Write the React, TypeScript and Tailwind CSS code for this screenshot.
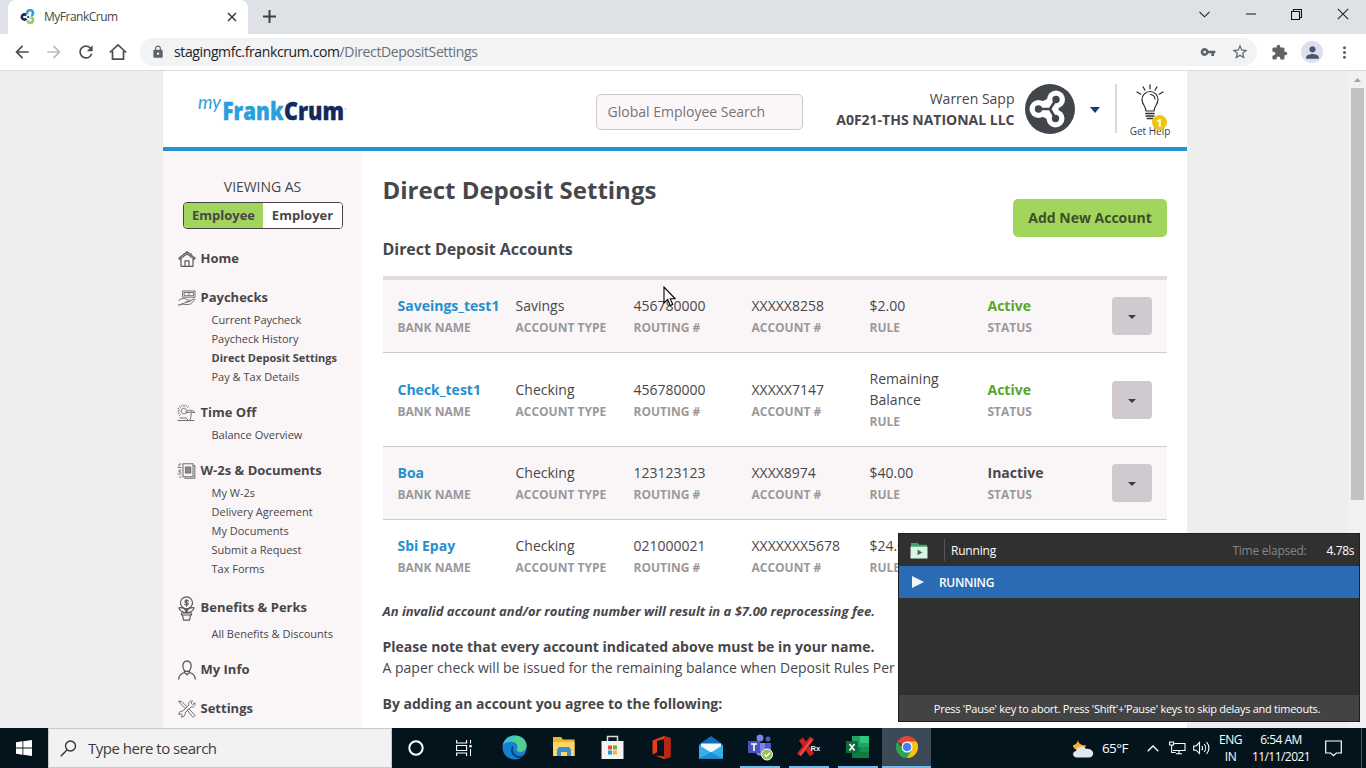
import type { ReactNode } from "react";
import {
  MdArrowBack,
  MdArrowForward,
  MdRefresh,
  MdLock,
  MdVpnKey,
  MdStarBorder,
  MdExtension,
  MdPerson,
  MdMoreVert,
} from "react-icons/md";

const line = {
  fill: "none",
  stroke: "#5b595d",
  strokeWidth: 1.2,
  strokeLinecap: "round" as const,
  strokeLinejoin: "round" as const,
};

function Favicon() {
  return (
    <svg width="16" height="16" viewBox="0 0 16 16" fill="none" strokeWidth="2.6">
      <path d="M6.4 6.3A2.6 2.6 0 1 0 6.400 9.700" stroke="#14285a" />
      <path d="M7.300 5.400A3 3 0 1 1 11.200 6.800" stroke="#2b9fdb" />
      <path d="M10.600 8.400A2.700 2.700 0 1 1 7.600 11.600" stroke="#8dcf5a" />
      <circle cx="8.200" cy="8" r="1.300" fill="#2f6f9f" />
    </svg>
  );
}

function TabStrip() {
  return (
    <div className="flex h-[34px] shrink-0 bg-[#dee1e6] pl-2">
      <div className="flex h-[34px] w-60 items-center rounded-t-lg bg-white pl-3">
        <Favicon />
        <span className="ml-2 w-[183px] text-[12px] tracking-[-0.5px] text-[#45474a]">MyFrankCrum</span>
        <svg width="10" height="10" viewBox="0 0 10 10" stroke="#3c4043" strokeWidth="1.6">
          <path d="M1 1l8 8M9 1l-8 8" />
        </svg>
      </div>
      <svg className="mt-[10px] ml-[15px]" width="13" height="13" viewBox="0 0 13 13" stroke="#3c4043" strokeWidth="2">
        <path d="M6.500 0v13M0 6.500h13" />
      </svg>
      <div className="mt-2 ml-auto flex h-3 items-center pr-[17px]">
        <svg className="mr-[36px]" width="11" height="7" viewBox="0 0 11 7" fill="none" stroke="#222" strokeWidth="1.1">
          <path d="M.5.8l5 5 5-5" />
        </svg>
        <svg className="mr-[35px]" width="10" height="2" viewBox="0 0 10 2">
          <path d="M0 .5h10v1H0z" fill="#111" />
        </svg>
        <svg className="mr-[35px]" width="11" height="11" viewBox="0 0 11 11" fill="none" stroke="#111" strokeWidth="1.1">
          <path d="M.5 2.500h8v8h-8zM2.500 2.500v-2h8v8h-2" />
        </svg>
        <svg width="12" height="12" viewBox="0 0 12 12" stroke="#222" strokeWidth="1.1">
          <path d="M.8.8l10.400 10.400M11.200.8L.8 11.200" />
        </svg>
      </div>
    </div>
  );
}

function Toolbar() {
  return (
    <div className="flex h-[37px] shrink-0 items-center border-b border-[#dadce0] bg-white pl-3 text-[#5f6368]">
      <MdArrowBack size={20} className="text-[#4a4d51]" />
      <MdArrowForward size={20} className="ml-3 text-[#babcbe]" />
      <MdRefresh size={20} className="ml-3 text-[#4a4d51]" />
      <svg className="ml-3" width="20" height="20" viewBox="0 0 20 20" fill="none" stroke="#4a4d51" strokeWidth="1.700">
        <path d="M1.800 10.500L10 2.800l8.200 7.700M4.500 9v8.200h11V9" />
      </svg>
      <div className="ml-3 flex h-7 w-[1117px] items-center rounded-full bg-[#f1f3f4] pr-[8px] pl-[11px]">
        <MdLock size={14} />
        <span className="ml-[9px] text-[14px] leading-5 tracking-[-0.38px] whitespace-nowrap text-[#202124]">
          stagingmfc.frankcrum.com<span className="text-[#6b6f74]">/DirectDepositSettings</span>
        </span>
        <MdVpnKey size={16} className="ml-auto" />
        <MdStarBorder size={18} className="ml-[15px]" />
      </div>
      <MdExtension size={17} className="ml-[14px]" />
      <div className="ml-[13px] flex size-[22px] items-center justify-center rounded-full bg-[#dbe0ec]">
        <MdPerson size={19} className="text-[#4a5470]" />
      </div>
      <MdMoreVert size={19} className="ml-[12px]" />
    </div>
  );
}

function Logo() {
  return (
    <svg width="152" height="32" viewBox="0 -2 152 32" className="overflow-visible font-['Open_Sans',sans-serif]">
      <text
        x="1"
        y="13"
        fontSize="20"
        fontStyle="italic"
        textLength="23"
        lengthAdjust="spacingAndGlyphs"
        fill="#2b9fdb"
        className="font-['Lato',sans-serif]"
      >
        my
      </text>
      <text
        x="25.500"
        y="24"
        fontSize="25.500"
        fontWeight="800"
        textLength="61"
        lengthAdjust="spacingAndGlyphs"
        fill="#2b9fdb"
        stroke="#2b9fdb"
        strokeWidth="0.400"
      >
        Frank
      </text>
      <text
        x="87"
        y="24"
        fontSize="25.500"
        fontWeight="800"
        textLength="60"
        lengthAdjust="spacingAndGlyphs"
        fill="#16295c"
        stroke="#16295c"
        strokeWidth="0.400"
      >
        Crum
      </text>
      <circle cx="148.500" cy="13" r=".8" fill="#9aa5bd" />
    </svg>
  );
}

function Avatar() {
  return (
    <svg width="50" height="50" viewBox="0 0 50 50">
      <circle cx="25" cy="25" r="25" fill="#42454c" />
      <g fill="#fff">
        <circle cx="13.500" cy="25" r="9" />
        <circle cx="31" cy="15.500" r="9" />
        <circle cx="30.500" cy="34.500" r="9" />
        <path d="M14 19l12-6 8 12-8 12-12-6z" />
      </g>
      <path d="M13.500 25H25l6-9.500M25 25l5.500 9.500" fill="none" stroke="#42454c" strokeWidth="2.600" />
      <g fill="#42454c">
        <circle cx="13.500" cy="25" r="3.700" />
        <circle cx="31" cy="15.500" r="3.700" />
        <circle cx="30.500" cy="34.500" r="3.700" />
      </g>
    </svg>
  );
}

function Bulb() {
  return (
    <svg width="30" height="36" viewBox="0 0 30 36" fill="none" stroke="#2c2c2e" strokeWidth="1.200" strokeLinecap="round">
      <path d="M15 .8v4M8 2.800l2 3.400M2 8l3.800 2.200M22 2.800l-2 3.400M28 8l-3.800 2.200" />
      <path d="M11 27c0-5-4-6-4-11.500a8 8 0 0 1 16 0c0 5.500-4 6.500-4 11.500z" />
      <path d="M15.500 10.500a5 5 0 0 1 4.500 4.500" />
      <path d="M11 29.500h8M11.300 32h7.400M12.500 34.500h5" strokeWidth="1.700" />
    </svg>
  );
}

function Header() {
  return (
    <header className="flex h-20 shrink-0 items-start border-b-4 border-[#2694cc] bg-white">
      <div className="mt-[23px] ml-[34px]">
        <Logo />
      </div>
      <div className="mt-[23px] ml-[247px] flex h-9 w-[207px] items-center rounded-[5px] border border-[#cfc8cc] bg-[#fbf7f8] pb-0.5 pl-[10.500px] text-[14px] text-[#757376]">
        Global Employee Search
      </div>
      <div className="mt-[17px] w-[212px] text-right text-[14px] leading-[21px] whitespace-nowrap text-[#48464a]">
        <div className="pr-[.5px]">Warren Sapp</div>
        <div className="pr-[.5px] font-bold">A0F21-THS NATIONAL LLC</div>
      </div>
      <div className="mt-[13px] ml-[10px]">
        <Avatar />
      </div>
      <svg className="mt-9 ml-[15px]" width="10" height="6" viewBox="0 0 10 6">
        <path d="M0 0h10L5 6z" fill="#123f7a" />
      </svg>
      <div className="mt-[13px] ml-[15px] h-[49px] w-0.5 bg-[#dcd8da]" />
      <div className="relative mt-[13px] ml-[11px] flex w-11 flex-col items-center">
        <Bulb />
        <span className="mt-1 text-[10px] leading-[14px] whitespace-nowrap text-[#3f3d40]">Get Help</span>
        <span className="absolute top-[31px] left-[24px] flex size-[15px] items-center justify-center rounded-full bg-[#edc50f] text-[11px] leading-none font-bold text-white">
          1
        </span>
      </div>
    </header>
  );
}

const icons: Record<string, ReactNode> = {
  home: (
    <svg width="18" height="16" viewBox="0 0 18 16" {...line}>
      <path d="M.8 7.200L9 .8l8.200 6.400-1 1.200L9 2.800 1.800 8.400zM3 8v7.300h12V8M7 15V9.800h4V15M13 2.500v1.800" />
    </svg>
  ),
  pay: (
    <svg width="18" height="16" viewBox="0 0 18 16" {...line} stroke="#747277" strokeWidth={1}>
      <path d="M5 1h12v6.200H5zM6.500 2.500h9v3.200h-9zM11 3v2.300" />
      <path d="M.8 10.200L4 8.600h3.500l2 1.400h2.300c1 0 .8 1.600-.2 1.600H8M12 11l3.800-2.200c1-.4 1.500.6.8 1.300L12.500 14c-3.500 1-6 .2-8.500.2L.8 15z" />
    </svg>
  ),
  time: (
    <svg width="19" height="18" viewBox="0 0 19 18" {...line} stroke="#747277" strokeWidth={1}>
      <circle cx="7" cy="7" r="2.800" strokeDasharray="2 .8" />
      <path d="M7 .8v1.500M2.500 2.500l1 1M11.500 2.500l-1 1M.8 7h1.400M2.500 11.500l1-1M4.500 1.200l.5 1M9.500 1.200l-.5 1M1 4.500l1.200.5M1 9.500L2.200 9" />
      <path d="M9 8.500c1-3 6-3.500 9 .2L13.500 8zM14 8c.4 3 0 6-1 8M1 16.500h16M3 14h6l2 2" />
    </svg>
  ),
  docs: (
    <svg width="19" height="16" viewBox="0 0 19 16" {...line} stroke="#747277" strokeWidth={1.100}>
      <path d="M6 .8h10v13H6zM16 2.500h1.800v12.700H8V14" />
      <path d="M8.500 4h5.200v6H8.500z" fill="#8b898c" />
      <path d="M4 1H2v2M4 4.500H1M4 7H2v2h2M4 11H1M4 14H1.500" strokeDasharray="1.500 1" />
    </svg>
  ),
  perks: (
    <svg width="17" height="25" viewBox="0 0 17 25" {...line}>
      <circle cx="8.500" cy="6.800" r="6" />
      <path d="M10.300 5c-1-1.200-3.500-.8-3.300.6.200 1.300 3 .8 3.200 2.200 0 1.400-2.500 1.600-3.400.4M8.500 3.500v6.600M8.500 13v4" />
      <path d="M8.500 16.500C5.500 16.500 2 15.500.9 11.800 4 11 7.600 12.500 8.500 16.500C9.500 12.500 13 11 16.100 11.800 15 15.500 11.500 16.500 8.500 16.500M3.500 17h10v2h-10zM4.500 19l1 5.200h6l1-5.200" />
    </svg>
  ),
  info: (
    <svg width="18" height="20" viewBox="0 0 18 20" {...line} strokeWidth={1.3}>
      <path d="M9 1c6 0 5 10.500 0 10.500S3 1 9 1zM6.500 10.500v2L9 14.700l2.500-2.200v-2M6.500 12.500C3 13.500.8 15 .8 19M11.500 12.500c3.500 1 5.700 2.500 5.700 6.500" />
    </svg>
  ),
  settings: (
    <svg width="18" height="18" viewBox="0 0 18 18" {...line} stroke="#747277" strokeWidth={1}>
      <path d="M1 1l3 .8 5 5-1.700 1.700-5-5zM9.500 10l1.200-1.200 6 6c1 1-1 3-2 2z" />
      <path d="M16.800 3.200l-2.500 1.300-1.200-1.300L14.500.9C11.500.5 10 2.800 10.800 5L4.700 11.200C2.500 10.500.5 12 1 15l2-1.500 1.500 1.400L3.200 17c2.600.3 4.500-1.500 3.800-4.100l6.100-6c2.500.7 4.400-1.200 3.700-3.700z" />
    </svg>
  ),
};

interface Section {
  icon: string;
  label: string;
  tall?: boolean;
  items: string[];
}

const sections: Section[] = [
  { icon: "home", label: "Home", items: [] },
  {
    icon: "pay",
    label: "Paychecks",
    items: ["Current Paycheck", "Paycheck History", "Direct Deposit Settings", "Pay & Tax Details"],
  },
  { icon: "time", label: "Time Off", items: ["Balance Overview"] },
  {
    icon: "docs",
    label: "W-2s & Documents",
    items: ["My W-2s", "Delivery Agreement", "My Documents", "Submit a Request", "Tax Forms"],
  },
  { icon: "perks", label: "Benefits & Perks", tall: true, items: ["All Benefits & Discounts"] },
  { icon: "info", label: "My Info", items: [] },
  { icon: "settings", label: "Settings", items: [] },
];

function Sidebar() {
  return (
    <nav className="w-[199px] shrink-0 bg-[#faf6f7] pt-[26px] text-[#48464a]">
      <div className="text-center text-[14px] leading-5 tracking-[-0.05px]">VIEWING AS</div>
      <div className="mr-[19px] ml-5 mt-[5px] flex h-[27px] overflow-hidden rounded-[4px] border border-[#454347] text-[13px] font-bold">
        <div className="flex w-[79px] items-center justify-center bg-[#a2d55c]">Employee</div>
        <div className="flex flex-1 items-center justify-center bg-white">Employer</div>
      </div>
      <div className="flex flex-col gap-3 pt-4">
        {sections.map((s) => (
          <div key={s.label}>
            <div className={s.tall ? "flex h-[34px] items-center" : "flex h-[27px] items-center"}>
              <div className="flex w-[37.500px] items-center justify-center pl-[10px]">{icons[s.icon]}</div>
              <span className="text-[13px] font-bold whitespace-nowrap">{s.label}</span>
            </div>
            {s.items.map((item) => (
              <div
                key={item}
                className={
                  item === "Direct Deposit Settings"
                    ? "h-[19px] pl-[48.500px] text-[11px] leading-[17px] font-bold whitespace-nowrap"
                    : "h-[19px] pl-[48.500px] text-[11px] leading-[17px] whitespace-nowrap"
                }
              >
                {item}
              </div>
            ))}
          </div>
        ))}
      </div>
    </nav>
  );
}

const accounts = [
  { name: "Saveings_test1", type: "Savings", routing: "456780000", account: "XXXXX8258", rule: "$2.00", status: "Active" },
  { name: "Check_test1", type: "Checking", routing: "456780000", account: "XXXXX7147", rule: "Remaining Balance", status: "Active" },
  { name: "Boa", type: "Checking", routing: "123123123", account: "XXXX8974", rule: "$40.00", status: "Inactive" },
  { name: "Sbi Epay", type: "Checking", routing: "021000021", account: "XXXXXXX5678", rule: "$24.00", status: "Active" },
];

function Cell({ label, className = "", children }: { label: string; className?: string; children: ReactNode }) {
  return (
    <div className="w-[118px] shrink-0 leading-[21px]">
      <div className={`text-[14px] ${className}`}>{children}</div>
      <div className="h-[21px] pt-px text-[12px] font-bold whitespace-nowrap text-[#9b989c]">{label}</div>
    </div>
  );
}

function Accounts() {
  return (
    <div className="border-t-4 border-[#e2dcdf]">
      {accounts.map((a, i) => (
        <div
          key={a.name}
          className={`flex items-center py-[15px] pr-[15px] pl-[14.500px] ${i % 2 === 0 ? "bg-[#faf6f7]" : "bg-white"} ${
            i < 3 ? "border-b border-[#cfcbce]" : "bg-white"
          }`}
        >
          <Cell label="BANK NAME" className="font-bold text-[#2590cf]">{a.name}</Cell>
          <Cell label="ACCOUNT TYPE">{a.type}</Cell>
          <Cell label="ROUTING #">{a.routing}</Cell>
          <Cell label="ACCOUNT #">{a.account}</Cell>
          <Cell label="RULE" className="w-20">{a.rule}</Cell>
          <Cell label="STATUS" className={a.status === "Active" ? "font-bold text-[#58a52b]" : "font-bold"}>
            {a.status}
          </Cell>
          <div className="ml-auto flex h-[38px] w-10 items-center justify-center rounded-[4px] bg-[#d0cad0]">
            <svg width="8" height="4" viewBox="0 0 8 4" className="mt-0.5">
              <path d="M0 0h8L4 4z" fill="#3f3d41" />
            </svg>
          </div>
        </div>
      ))}
    </div>
  );
}

function Main() {
  return (
    <main className="w-[825px] shrink-0 bg-white pr-5 pl-[21px] text-[#48464a]">
      <div className="flex justify-between">
        <div className="-ml-[.5px]">
          <h1 className="mt-6 text-[24px] leading-[30px] font-bold whitespace-nowrap">Direct Deposit Settings</h1>
          <h2 className="mt-8 h-[39px] text-[16px] leading-6 font-bold tracking-[-0.05px] whitespace-nowrap">Direct Deposit Accounts</h2>
        </div>
        <div className="mt-12 flex h-[38px] w-[154px] items-center justify-center rounded-[5px] bg-[#a2d55c] pb-0.5 text-[14px] font-bold whitespace-nowrap text-[#3c4f2b]">
          Add New Account
        </div>
      </div>
      <Accounts />
      <div className="-ml-[.5px]">
        <div className="mt-[9px] text-[13px] leading-5 font-bold whitespace-nowrap italic">
          An invalid account and/or routing number will result in a $7.00 reprocessing fee.
        </div>
        <div className="mt-[15px] text-[14px] leading-[21px] whitespace-nowrap">
          <div className="font-bold">Please note that every account indicated above must be in your name.</div>
          <div>A paper check will be issued for the remaining balance when Deposit Rules Per</div>
        </div>
        <div className="mt-[15px] text-[14px] leading-[21px] font-bold">By adding an account you agree to the following:</div>
      </div>
    </main>
  );
}

function RunPanel() {
  return (
    <div className="absolute top-[533px] left-[898px] flex h-[189px] w-[462px] flex-col border border-[#202020] bg-[#303030] text-[12px] text-white">
      <div className="flex h-8 shrink-0 items-center pr-[5px] pl-[11px]">
        <svg width="18" height="17" viewBox="0 0 19 18">
          <path d="M1 1h7l2 2h8v4H1z" fill="#3da66e" />
          <path d="M.5 5h18v12.500H.5z" fill="#d9f3e4" />
          <path d="M8 8l5 3-5 3z" fill="#3f6e55" />
        </svg>
        <div className="ml-4 h-[22px] w-px bg-[#565656]" />
        <span className="ml-1.5 pt-0.5 tracking-[-0.2px]">Running</span>
        <span className="ml-auto pt-0.5 tracking-[-0.25px] text-[#858585]">Time elapsed:</span>
        <span className="ml-5 pt-0.5 tracking-[-0.4px]">4.78s</span>
      </div>
      <div className="flex h-8 shrink-0 items-center bg-[#2a6cb3] pl-[13px]">
        <svg width="12" height="12" viewBox="0 0 12 12">
          <path d="M0 0l12 6-12 6z" fill="#eef5fc" />
        </svg>
        <span className="ml-[15px] pt-px font-semibold tracking-[-0.3px]">RUNNING</span>
      </div>
      <div className="mt-auto flex h-[26px] items-center justify-center bg-[#434343] pt-0.5 pr-1 text-[11px] tracking-[-0.27px] whitespace-nowrap">
        Press 'Pause' key to abort. Press 'Shift'+'Pause' keys to skip delays and timeouts.
      </div>
    </div>
  );
}

function Edge() {
  return (
    <svg width="25" height="25" viewBox="0 0 24 24">
      <circle cx="12" cy="12" r="11.500" fill="#1681cf" />
      <path d="M.6 10.500C2 3 8 .5 12.500.5 19 .5 23.500 5 23.500 10c0 4-3 6-6 6-2.500 0-3.500-1-3.300-2 .5-.7 1-1.500.8-3C14.500 8.500 12 6.500 8.500 6.500 5 6.500 2 8 .6 10.500z" fill="#3cc7c2" />
      <path d="M14 1c6 .8 9.500 4.800 9.500 9 0 4-3 6-6 6-2.500 0-3.500-1-3.300-2 2-2 1-9-6-8z" fill="#5bd17e" opacity=".75" />
      <path d="M9.500 11c-2.500 5 1 11 7 11 2 0 4-1 5-3-4 2.500-11 1-11-5 0-1.500.5-2.500 1-3z" fill="#0b3f86" />
    </svg>
  );
}

function Explorer() {
  return (
    <svg width="22" height="20" viewBox="0 0 22 20">
      <path d="M0 0h8l2 2.500h11.500V19H0z" fill="#f1b62f" />
      <path d="M0 5h21.500v14H0z" fill="#fbd765" />
      <path d="M4 19v-6.500L6 10h10l2 2.500V19h-4v-4H8v4z" fill="#3c8ed2" />
    </svg>
  );
}

function Store() {
  return (
    <svg width="23" height="25" viewBox="0 0 23 25">
      <path d="M6.500 7V1.500h10V7" fill="none" stroke="#dcdcdc" strokeWidth="1.500" />
      <path d="M.5 6h22v18H.5z" fill="#f3f3f3" />
      <path d="M7 10.500h4v4H7z" fill="#e8502d" />
      <path d="M12 10.500h4v4h-4z" fill="#7aac2f" />
      <path d="M7 15.500h4v4H7z" fill="#2997dc" />
      <path d="M12 15.500h4v4h-4z" fill="#f4b62b" />
    </svg>
  );
}

function Office() {
  return (
    <svg width="19" height="23" viewBox="0 0 19 23">
      <path d="M12 0l6.500 2v19L12 23l-9-3.500 9 1V3L5 5v11.500L.5 18.500v-14z" fill="#e63e16" />
      <path d="M12 0l6.500 2v19L12 23z" fill="#b92514" />
    </svg>
  );
}

function Mail() {
  return (
    <svg width="24" height="23" viewBox="0 0 24 23">
      <path d="M0 8.500L12 0l12 8.500V22.500H0z" fill="#126fc0" />
      <path d="M2 7.500h20V16H2z" fill="#f4f9fd" />
      <path d="M0 9l12 7.500L24 9v13.500H0z" fill="#35aee9" />
      <path d="M0 22.500l12-6 12 6z" fill="#1d8fd8" />
    </svg>
  );
}

function Teams() {
  return (
    <svg width="26" height="27" viewBox="0 0 26 27">
      <circle cx="13" cy="4" r="3.500" fill="#7b83eb" />
      <circle cx="21" cy="5" r="2.500" fill="#5059c9" />
      <path d="M9 9h9v9c0 5-9 5-9 0z" fill="#7b83eb" />
      <path d="M18 9h6v7c0 3-3 4-6 3z" fill="#5059c9" />
      <path d="M1 7h12v12H1z" fill="#4b53bc" />
      <path d="M4 10h6M7 10v7" stroke="#fff" strokeWidth="1.600" />
      <circle cx="20" cy="20.500" r="5.500" fill="#92c353" stroke="#fff" />
      <path d="M17.500 20.500l2 2 3.200-3.800" fill="none" stroke="#fff" strokeWidth="1.500" />
    </svg>
  );
}

function RxTool() {
  return (
    <svg width="24" height="24" viewBox="0 0 24 24">
      <path d="M2 20L15 3M4 4l11 16" stroke="#c9231f" strokeWidth="5" />
      <path d="M3 20L15 4" stroke="#f0594b" strokeWidth="1.500" />
      <text x="13.500" y="15.500" fontSize="7.500" fontWeight="700" fill="#f1f1f1" className="font-['Liberation_Sans',sans-serif]">
        Rx
      </text>
    </svg>
  );
}

function Excel() {
  return (
    <svg width="23" height="22" viewBox="0 0 23 22">
      <path d="M6 0h17v22H6z" fill="#21a366" />
      <path d="M14 0h9v7h-9z" fill="#33c481" />
      <path d="M6 11h17v11H6z" fill="#107c41" />
      <path d="M14 11h9v5h-9z" fill="#169154" />
      <path d="M0 5h12v12H0z" fill="#0e6b3a" />
      <path d="M3.500 8l5 6.500M8.500 8l-5 6.500" stroke="#fff" strokeWidth="1.700" />
    </svg>
  );
}

function Chrome() {
  return (
    <svg width="22" height="22" viewBox="0 0 22 22">
      <path d="M11 11L1.470 5.500A11 11 0 0 1 20.530 5.500z" fill="#e24335" />
      <path d="M11 11V5.500h9.530A11 11 0 0 1 11 22z" fill="#fbc116" />
      <path d="M11 11l4.800 2.700L11 22A11 11 0 0 1 1.470 5.500L6.200 13.700z" fill="#2da44f" />
      <circle cx="11" cy="11" r="5.500" fill="#fff" />
      <circle cx="11" cy="11" r="4.300" fill="#3f82ee" />
    </svg>
  );
}

const apps: { name: string; icon: ReactNode; state: "idle" | "open" | "active" }[] = [
  { name: "edge", icon: <Edge />, state: "idle" },
  { name: "explorer", icon: <Explorer />, state: "idle" },
  { name: "store", icon: <Store />, state: "idle" },
  { name: "office", icon: <Office />, state: "idle" },
  { name: "mail", icon: <Mail />, state: "idle" },
  { name: "teams", icon: <Teams />, state: "open" },
  { name: "rx", icon: <RxTool />, state: "open" },
  { name: "excel", icon: <Excel />, state: "open" },
  { name: "chrome", icon: <Chrome />, state: "active" },
];

function Taskbar() {
  return (
    <div className="flex h-10 shrink-0 bg-[#04141d] text-[12px] text-white">
      <div className="flex w-12 items-center justify-center">
        <svg width="16" height="16" viewBox="0 0 16 16" fill="#fff">
          <path d="M0 2.200l6.500-.9v6.300H0zM7.300 1.200L16 0v7.600H7.300zM0 8.400h6.500v6.300L0 13.800zM7.300 8.400H16V16l-8.700-1.200z" />
        </svg>
      </div>
      <div className="flex w-[344px] items-center border border-[#c9c9c9] bg-[#f2f2f2] pl-[11px] text-[#3c3c3c]">
        <svg width="17" height="17" viewBox="0 0 17 17" fill="none" stroke="#2d2d2d" strokeWidth="1.300">
          <circle cx="10.500" cy="6" r="5" />
          <path d="M7 10L.8 16.200" />
        </svg>
        <span className="ml-[11px] text-[15px] tracking-[-0.5px]">Type here to search</span>
      </div>
      <div className="flex w-12 items-center justify-center">
        <svg width="16" height="16" viewBox="0 0 16 16" fill="none" stroke="#fff" strokeWidth="2">
          <circle cx="8" cy="8" r="6.700" />
        </svg>
      </div>
      <div className="mr-[2px] flex w-12 items-center justify-center">
        <svg width="16" height="16" viewBox="0 0 16 16" fill="none" stroke="#fff" strokeWidth="1.100">
          <path d="M.6 0v3h10V0M.6 5.500h10v5H.6zM.6 16v-3h10v3M14.500 0v3.500M14.500 9v7" />
          <path d="M13.300 5h2.400v2.400h-2.400z" fill="#fff" stroke="none" />
        </svg>
      </div>
      {apps.map((app) => (
        <div
          key={app.name}
          className={`flex w-[49px] flex-col items-center ${app.state === "active" ? "bg-[#3b4a54]" : ""}`}
        >
          <div className="flex h-[38px] flex-1 items-center">{app.icon}</div>
          <div
            className={
              app.state === "idle"
                ? "h-0.5 w-full"
                : app.state === "open"
                  ? "h-0.5 w-10 bg-[#76b9ed]"
                  : "h-0.5 w-full bg-[#76b9ed]"
            }
          />
        </div>
      ))}
      <div className="ml-auto flex items-center">
        <svg width="23" height="20" viewBox="0 0 23 20">
          <path d="M7 1c0 5 4 7 8 6-1 4-5 6-9 5-3-1-4-3-4-5 2 0 5-2 5-6z" fill="#f9b32b" />
          <path d="M6 19.500c-5 0-5-6-1-6.500 1-5 8-6 10-2 5-1 8 3 7 5.500-.5 2-2 3-4 3z" fill="#dfe8f2" />
        </svg>
        <span className="ml-2 w-[45px] text-[13.500px] tracking-[-0.6px]">65°F</span>
        <svg width="12" height="7" viewBox="0 0 12 7" fill="none" stroke="#fff" strokeWidth="1.300">
          <path d="M.7 6.200L6 1l5.300 5.200" />
        </svg>
        <svg className="ml-[10px]" width="17" height="14" viewBox="0 0 17 14" fill="none" stroke="#fff" strokeWidth="1.100">
          <path d="M5.500 2.500h10.500v7H4M10 9.500v3M7 12.800h6M.6 1h4v3h-4zM2.600 4v7.500h4" />
        </svg>
        <svg className="ml-[7px]" width="17" height="14" viewBox="0 0 17 14" fill="none" stroke="#fff" strokeWidth="1.100">
          <path d="M.7 5h2.500L6.500 1.500v11L3.200 9.200H.7zM8.800 5c1 1.200 1 3 0 4.200M11.200 3.200c2 2.200 2 5.500 0 7.700M13.500 1.200c3.200 3.200 3.200 8.500 0 11.700" />
        </svg>
        <div className="ml-2 w-[25px] text-center text-[12px] leading-[17px] tracking-[-0.5px]">
          <div>ENG</div>
          <div>IN</div>
        </div>
        <div className="ml-2 w-[60px] text-center text-[12px] leading-[17px] tracking-[-0.55px] whitespace-nowrap">
          <div>6:54 AM</div>
          <div>11/11/2021</div>
        </div>
        <svg className="mr-[19px] ml-[14px]" width="17" height="17" viewBox="0 0 17 17" fill="none" stroke="#fff" strokeWidth="1.200">
          <path d="M.7 1h15.600v12h-5L8.500 15.700 5.700 13h-5z" />
        </svg>
        <div className="mr-1 h-10 w-px bg-[#4a555d]" />
      </div>
    </div>
  );
}

export default function App() {
  return (
    <div className="relative flex h-[768px] w-[1366px] flex-col overflow-hidden bg-white font-['Open_Sans',sans-serif]">
      <TabStrip />
      <Toolbar />
      <div className="flex h-[657px] overflow-hidden bg-[#eeeeee] pl-[163px]">
        <div className="flex w-[1024px] flex-col">
          <Header />
          <div className="flex flex-1">
            <Sidebar />
            <Main />
          </div>
        </div>
        <div className="ml-auto flex w-[17px] flex-col items-center bg-[#f1f1f1] pt-[7px]">
          <svg width="7" height="4" viewBox="0 0 7 4">
            <path d="M0 4l3.500-4L7 4z" fill="#a3a3a3" />
          </svg>
          <div className="mt-[6px] h-[412px] w-[13px] bg-[#c1c1c1]" />
        </div>
      </div>
      <Taskbar />
      <RunPanel />
      <svg className="absolute top-[286px] left-[663px]" width="13" height="21" viewBox="0 0 13 21">
        <path d="M1 1v16l3.700-3.500L7.200 19.500l2.500-1.100-2.500-5.600h5z" fill="#fff" stroke="#000" strokeWidth="1.100" />
      </svg>
    </div>
  );
}
